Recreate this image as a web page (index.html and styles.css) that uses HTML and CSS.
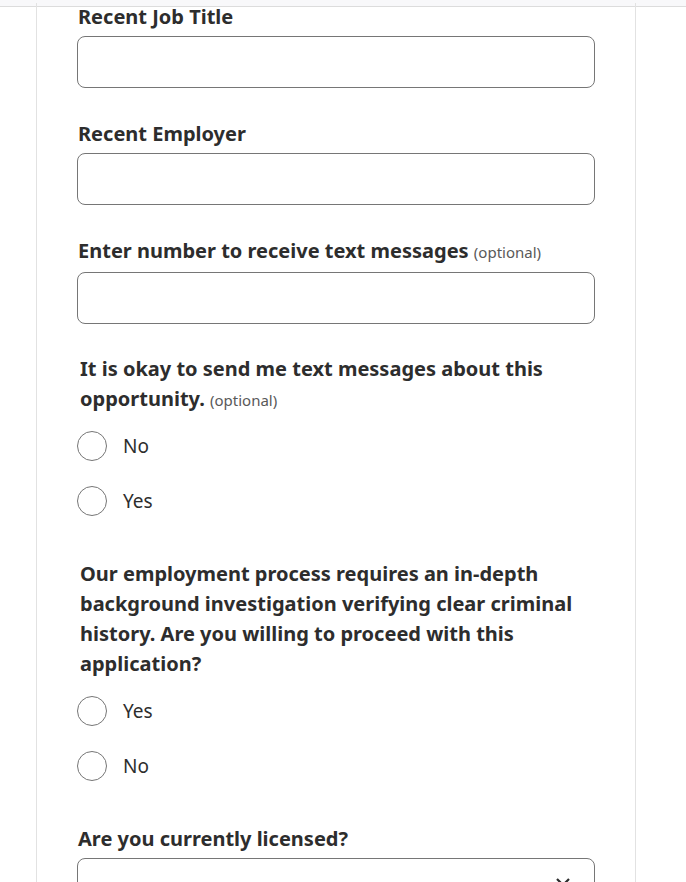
FILE: index.html
```html
<!DOCTYPE html>
<html lang="en">
<head>
<meta charset="utf-8">
<title>Application</title>
<link rel="stylesheet" href="styles.css">
</head>
<body>
<div class="topbar"></div>
<main class="card">
  <div class="field first">
    <label class="label" for="job">Recent Job Title</label>
    <input class="input" id="job" type="text">
  </div>
  <div class="field">
    <label class="label" for="emp">Recent Employer</label>
    <input class="input" id="emp" type="text">
  </div>
  <div class="field">
    <label class="label" for="phone">Enter number to receive text messages <span class="opt">(optional)</span></label>
    <input class="input" id="phone" type="tel">
  </div>
  <fieldset class="group">
    <legend class="question">It is okay to send me text messages about this opportunity. <span class="opt">(optional)</span></legend>
    <label class="radio"><input type="radio" name="sms"><span class="circle"></span><span class="rtext">No</span></label>
    <label class="radio"><input type="radio" name="sms"><span class="circle"></span><span class="rtext">Yes</span></label>
  </fieldset>
  <fieldset class="group second">
    <legend class="question">Our employment process requires an in-depth background investigation verifying clear criminal history. Are you willing to proceed with this application?</legend>
    <label class="radio"><input type="radio" name="bg"><span class="circle"></span><span class="rtext">Yes</span></label>
    <label class="radio"><input type="radio" name="bg"><span class="circle"></span><span class="rtext">No</span></label>
  </fieldset>
  <div class="field last">
    <label class="label" for="lic">Are you currently licensed?</label>
    <div class="select">
      <svg class="chev" width="16" height="10" viewBox="0 0 16 10"><path d="M2 2l6 6 6-6" fill="none" stroke="#2d2d2d" stroke-width="2.2"/></svg>
    </div>
  </div>
</main>
</body>
</html>
```
FILE: styles.css
```css
html, body {
  margin: 0;
  padding: 0;
  background: #fff;
  height: 882px;
  overflow: hidden;
  font-family: "Noto Sans", "Open Sans", sans-serif;
  color: #2d2d2d;
}
.topbar {
  height: 6px;
  background: #f8f8fa;
  border-bottom: 1px solid #dcdcdc;
}
.card {
  margin-left: 36px;
  border-left: 1px solid #e2e2e2;
  border-right: 1px solid #e2e2e2;
  padding: 0 40px 60px 40px;
  box-sizing: border-box;
  width: 600px;
  min-height: 900px;
}
.field {
  display: flex;
  flex-direction: column;
  margin-top: 32px;
}
.field.first {
  margin-top: -4px;
}
.field.last {
  margin-top: 32px;
}
.label {
  font-size: 20px;
  font-weight: 700;
  line-height: 27px;
  margin-bottom: 6px;
  padding-left: 1px;
}
.opt {
  font-size: 15px;
  font-weight: 400;
  color: #595959;
}
.input {
  box-sizing: border-box;
  width: 518px;
  height: 52px;
  margin: 0;
  border: 1px solid #767676;
  border-radius: 8px;
  background: #fff;
  font: inherit;
}
.group {
  border: 0;
  margin: 30px 0 0 0;
  padding: 0;
  min-width: 0;
}
.group.second {
  margin-top: 31px;
}
.question {
  padding: 0 0 0 3px;
  font-size: 20px;
  font-weight: 700;
  line-height: 30px;
  margin-bottom: 3px;
}
.group.second .question {
  margin-bottom: 4px;
}
.radio {
  display: flex;
  align-items: center;
  height: 55px;
  cursor: pointer;
}
.radio input {
  position: absolute;
  opacity: 0;
  width: 0;
  height: 0;
}
.circle {
  box-sizing: border-box;
  width: 30px;
  height: 30px;
  border: 1px solid #767676;
  border-radius: 50%;
  background: #fff;
  flex: none;
}
.rtext {
  margin-left: 16px;
  font-size: 19px;
  line-height: 26px;
}
.select {
  position: relative;
  box-sizing: border-box;
  width: 518px;
  height: 52px;
  border: 1px solid #767676;
  border-radius: 8px;
  background: #fff;
}
.chev {
  position: absolute;
  right: 23px;
  top: 18px;
}
```
